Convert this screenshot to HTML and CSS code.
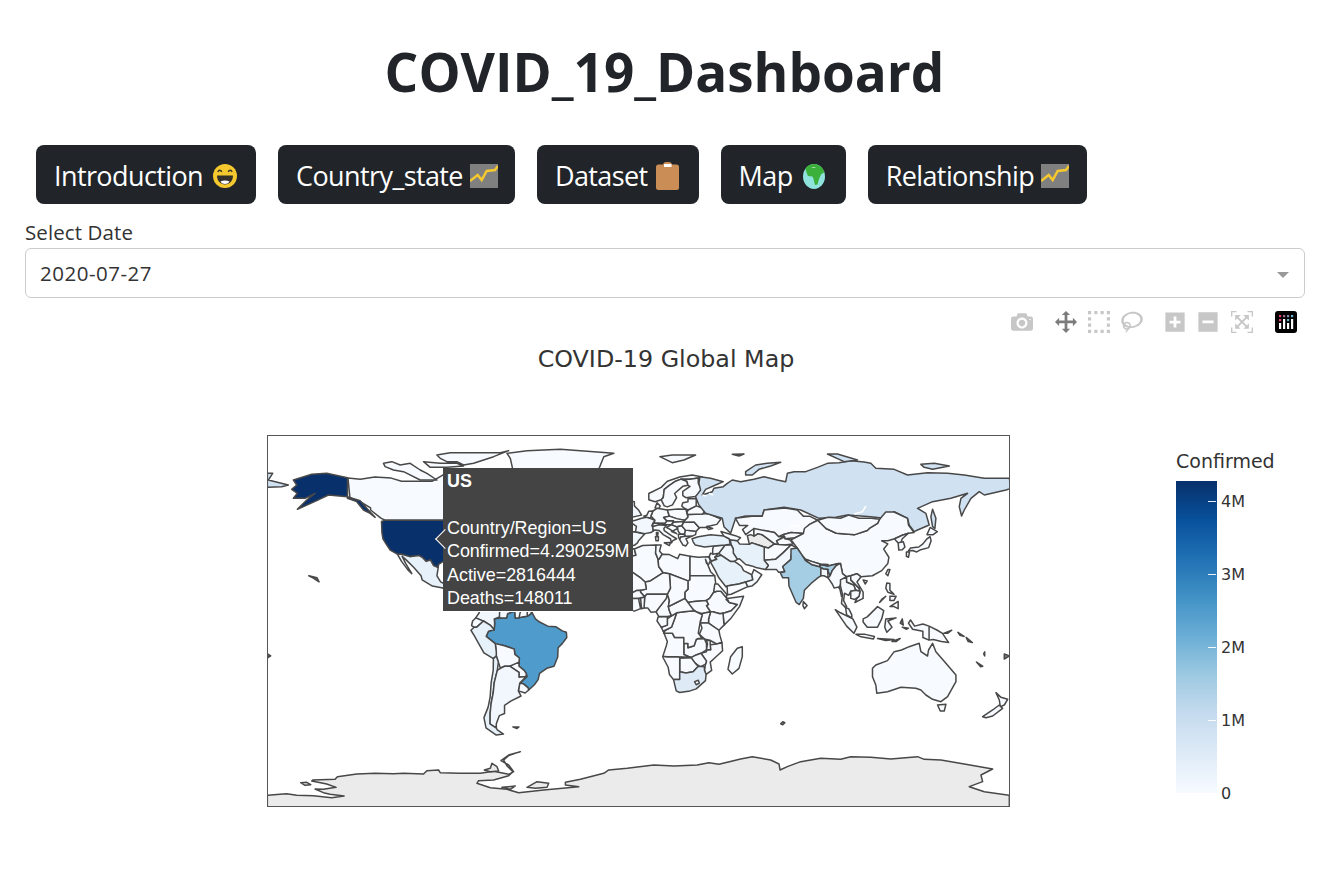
FILE: index.html
```html
<!DOCTYPE html>
<html lang="en">
<head>
<meta charset="utf-8">
<title>COVID_19_Dashboard</title>
<link rel="stylesheet" href="styles.css">
</head>
<body>
<h1 class="page-title">COVID_19_Dashboard</h1>

<nav class="tabs">
  <a class="tab">Introduction
    <svg class="emoji smile" viewBox="0 0 24 24"><circle cx="12" cy="12" r="12" fill="#f5c92e"/><path d="M4.800 7.800q2-3 4 0M15.200 7.800q2-3 4 0" fill="none" stroke="#33302a" stroke-width="1.500"/><path d="M4 11.500h16c0 5.500-3.500 9-8 9s-8-3.500-8-9z" fill="#33302a"/><path d="M7.500 17.500c2.800-1.500 6.200-1.500 9 0-1.200 1.800-2.800 2.500-4.500 2.500s-3.300-.7-4.500-2.500z" fill="#fff"/></svg>
  </a>
  <a class="tab">Country_state
    <svg class="emoji chart" viewBox="0 0 28 24"><rect width="28" height="24" fill="#808080"/><path d="M0 17l7.700-6 4 5 5-9 8.300-1 3-4" fill="none" stroke="#f5c92e" stroke-width="2.500"/></svg>
  </a>
  <a class="tab">Dataset
    <svg class="emoji clip" viewBox="0 0 23 28"><rect y="2.500" width="23" height="25.500" rx="2.500" fill="#c98d55"/><path d="M7 3.500q0-3.500 3-3.500h3q3 0 3 3.500v2H7z" fill="#c98d55"/><rect x="8" y="2" width="7.500" height="3" fill="#fff"/></svg>
  </a>
  <a class="tab">Map
    <svg class="emoji globe" viewBox="0 0 22 25"><ellipse cx="11" cy="12.500" rx="11" ry="12.500" fill="#8ee3dc"/><path d="M2.500 4.500C4.500 1.500 7.800 0 11 0s6.500 1.500 8.500 4.500L21.500 8 18 10.500 16 15 14.500 20.500 12 21 10.500 15 9.500 12.500 5 12 3.500 8.500z" fill="#3bb03b"/><path d="M8 3.500l5-.5-2 1z" fill="#e6f4e6"/></svg>
  </a>
  <a class="tab">Relationship
    <svg class="emoji chart" viewBox="0 0 28 24"><rect width="28" height="24" fill="#808080"/><path d="M0 17l7.700-6 4 5 5-9 8.300-1 3-4" fill="none" stroke="#f5c92e" stroke-width="2.500"/></svg>
  </a>
</nav>

<section class="filter">
  <label class="filter-label">Select Date</label>
  <div class="select"><span>2020-07-27</span><i class="caret"></i></div>
</section>

<section class="graph">
  <div class="modebar">
    <div class="mode-group">
      <svg class="mode" viewBox="0 0 1000 1000"><path transform="matrix(1 0 0 -1 0 850)" d="m500 450c-83 0-150-67-150-150 0-83 67-150 150-150 83 0 150 67 150 150 0 83-67 150-150 150z m400 150h-120c-16 0-34 13-39 29l-31 93c-6 15-23 28-40 28h-340c-16 0-34-13-39-28l-31-94c-6-15-23-28-40-28h-120c-55 0-100-45-100-100v-450c0-55 45-100 100-100h800c55 0 100 45 100 100v450c0 55-45 100-100 100z m-400-550c-138 0-250 112-250 250 0 138 112 250 250 250 138 0 250-112 250-250 0-138-112-250-250-250z m365 380c-19 0-35 16-35 35 0 19 16 35 35 35 19 0 35-16 35-35 0-19-16-35-35-35z"/></svg>
    </div>
    <div class="mode-group">
      <svg class="mode active" viewBox="0 0 1000 1000"><path transform="matrix(1 0 0 -1 0 850)" d="m1000 350l-187 188 0-125-250 0 0 250 125 0-188 187-187-187 125 0 0-250-250 0 0 125-188-188 186-187 0 125 252 0 0-250-125 0 187-188 188 188-125 0 0 250 250 0 0-126 187 188z"/></svg>
      <svg class="mode" viewBox="0 0 1000 1000"><path transform="matrix(1 0 0 -1 0 850)" d="M0 850l0-143 143 0 0 143-143 0z m286 0l0-143 143 0 0 143-143 0z m285 0l0-143 143 0 0 143-143 0z m286 0l0-143 143 0 0 143-143 0z m-857-286l0-143 143 0 0 143-143 0z m857 0l0-143 143 0 0 143-143 0z m-857-285l0-143 143 0 0 143-143 0z m857 0l0-143 143 0 0 143-143 0z m-857-286l0-143 143 0 0 143-143 0z m286 0l0-143 143 0 0 143-143 0z m285 0l0-143 143 0 0 143-143 0z m286 0l0-143 143 0 0 143-143 0z"/></svg>
      <svg class="mode" viewBox="0 0 1031 1000"><path transform="matrix(1 0 0 -1 0 850)" d="m1018 538c-36 207-290 336-568 286-277-48-473-256-436-463 10-57 36-108 76-151-13-66 11-137 68-183 34-28 75-41 114-42l-55-70 0 0c-2-1-3-2-4-3-10-14-8-34 5-45 14-11 34-8 45 4 1 1 2 3 2 5l0 0 113 140c16 11 31 24 45 40 4 3 6 7 8 11 48-3 100 0 151 9 278 48 473 255 436 462z m-624-379c-80 14-149 48-197 96 42 42 109 47 156 9 33-26 47-66 41-105z m-187-74c-19 16-33 37-39 60 50-32 109-55 174-68-42-25-95-24-135 8z m360 75c-34-7-69-9-102-8 8 62-16 128-68 170-73 59-175 54-244-5-9 20-16 40-20 61-28 159 121 317 333 354s407-60 434-217c28-159-121-318-333-355z"/></svg>
    </div>
    <div class="mode-group">
      <svg class="mode narrow" viewBox="0 0 875 1000"><path transform="matrix(1 0 0 -1 0 850)" d="m1 787l0-875 875 0 0 875-875 0z m687-500l-187 0 0-187-125 0 0 187-188 0 0 125 188 0 0 187 125 0 0-187 187 0 0-125z"/></svg>
      <svg class="mode narrow" viewBox="0 0 875 1000"><path transform="matrix(1 0 0 -1 0 850)" d="m0 788l0-876 875 0 0 876-875 0z m688-500l-500 0 0 125 500 0 0-125z"/></svg>
      <svg class="mode" viewBox="0 0 1000 1000"><path transform="matrix(1 0 0 -1 0 850)" d="m250 850l-187 0-63 0 0-62 0-188 63 0 0 188 187 0 0 62z m688 0l-188 0 0-62 188 0 0-188 62 0 0 188 0 62-62 0z m-875-938l0 188-63 0 0-188 0-62 63 0 187 0 0 62-187 0z m875 188l0-188-188 0 0-62 188 0 62 0 0 62 0 188-62 0z m-125 188l-1 0-93-94-156 156 156 156 92-93 2 0 0 250-250 0 0-2 93-92-156-156-156 156 94 92 0 2-250 0 0-250 0 0 93 93 157-156-157-156-93 94 0 0 0-250 250 0 0 0-94 93 156 157 156-157-93-93 0 0 250 0 0 250z"/></svg>
    </div>
    <svg class="logo" viewBox="0 0 22 22"><rect width="22" height="22" rx="3" fill="#000"/><rect x="4" y="4" width="2.200" height="2.200" fill="#e83e6f"/><rect x="8" y="4" width="2.200" height="2.200" fill="#a56a90"/><rect x="12" y="4" width="2.200" height="2.200" fill="#8a8ab0"/><rect x="16" y="4" width="2.200" height="2.200" fill="#6cb4d0"/><rect x="4" y="8" width="2.200" height="2.200" fill="#e83e6f"/><rect x="12" y="8" width="2.200" height="2.200" fill="#6cb4d0"/><g fill="#fff"><rect x="4" y="12" width="2.200" height="6"/><rect x="8" y="8" width="2.200" height="10"/><rect x="12" y="12" width="2.200" height="6"/><rect x="16" y="8" width="2.200" height="10"/></g></svg>
  </div>

  <h2 class="graph-title">COVID-19 Global Map</h2>

  <div class="plot">
    <div class="map">
      <svg class="world" viewBox="268 436 740 370" preserveAspectRatio="none">
        <g transform="translate(260 610) scale(.33333)">
          <path class="ant" d="M22 556 60 553 80 551 110 556 160 557 215 563 252 558 210 553 190 548 165 537 190 538 228 532 200 522 155 513 158 510 225 508 232 500 290 492 345 490 400 491 430 490 490 492 500 482 535 480 540 488 600 490 660 490 700 484 745 493 760 485 745 465 722 452 745 435 780 425 745 437 730 450 740 468 758 485 745 497 700 510 655 512 650 520 690 533 740 538 775 548 850 540 955 530 915 525 915 517 960 508 1030 490 1045 480 1100 475 1180 465 1240 468 1310 465 1345 458 1375 463 1440 447 1475 440 1530 450 1555 462 1558 480 1580 470 1620 455 1680 445 1740 448 1770 440 1830 442 1890 447 1970 440 1990 448 2040 450 2110 462 2195 477 2160 495 2165 515 2125 530 2170 545 2245 556 2245 595 22 595Z"/>
          <path class="ant" d="M122 518 140 517 152 524 135 526Z M672 480 690 475 695 460 710 470 715 483 690 485Z M725 532 745 530 765 528 750 538Z M800 532 830 515 865 520 860 532 825 535Z"/>
        </g>
        <g transform="translate(638 621) scale(2.058 2.056)">
          <!-- North America -->
          <path class="c0" d="M-141-69.600 -135-69 -128-70 -120-69.500 -115-68 -108-68 -100-68 -95-71 -90-69 -85-69 -81-67 -87-64.500 -94-61 -94-58.800 -88-56.800 -82-55 -82-52.500 -79-51.500 -78-55 -77-58 -78-62.500 -70-61 -65-60 -61-56 -56-52 -60-50 -66-50 -61-46 -65-44 -67-45 -67-47 -71-45 -75-45 -79-43 -82-43 -83-46 -89-48 -95-49 -123-49 -125-50 -130-54 -130-55 -135-58 -140-59.800Z"/>
          <path class="us" d="M-124.700-48.400 -123-49 -95-49 -89-48 -83-46 -82-43 -79-43 -75-45 -71-45 -67-47 -67-45 -70-43 -74-40.500 -76-38 -76-35 -81-31.500 -80-26 -81-25 -82.500-28 -84-30 -89-30 -90-29 -94-29.500 -97-27.500 -97.200-26 -99.500-27 -101-29.700 -103-29 -105-31 -106.500-31.800 -111-31.300 -115-32.500 -117-32.500 -120.500-34.500 -122.500-37.500 -124-40 -124.500-43Z"/>
          <path class="c2" d="M-117-32.500 -115-32.500 -111-31.300 -106.500-31.800 -105-31 -103-29 -101-29.700 -99.500-27 -97.200-26 -97.800-22 -96-19 -94-18 -91-18.700 -90.500-21 -87-21.500 -88-18.500 -89-17.800 -91-16 -92-14.500 -95-16 -100-17 -105-20 -105.500-22 -109-26 -112.500-29.500 -114.700-31.500 -113-28 -110-23 -112-25 -115-29Z"/>
          <path class="dot" d="M-160-22 -158-21 -155-19 -156-21Z"/>
          <!-- South America -->
          <path class="br" d="M-60-5 -59.800-1.500 -56.500-2 -54-2.300 -51.600-4 -50-1 -48 .5 -44 2.500 -40 2.800 -37 4.800 -35 5.500 -34.800 8 -37 11 -39 13 -39.200 17.500 -41 22 -44.500 23 -48 25.500 -48.700 28.500 -50.500 31 -53.400 33.700 -53.500 32.500 -56 30.500 -57.600 30.200 -54 27 -54.500 25.500 -55.500 24 -58 22 -57.800 18 -60 16.200 -60.300 13.700 -65 12 -69.500 11 -73.900 7.500 -72.800 5 -70 4.300 -69.800 1 -70-1 -67-1.500 -64-1.500 -63.500-3.500Z"/>
          <path class="c1" d="M-71.500-12.300 -75-11 -77.500-8 -77.300-4 -79-1.500 -75 .2 -72 2 -70 4.300 -69.800 1 -70-1 -67.500-2 -67.300-6 -70-7 -72-7 -73-9Z M-71.500-12 -68-10.500 -62-10.700 -60-8.500 -61-5 -60-5 -63.500-3.500 -64-1.500 -67-1.500 -67.500-2 -67.300-6 -70-7 -72-7 -73-9Z"/>
          <path class="c0" d="M-60-8.500 -57-6 -58-1.500 -59.800-1.500 -60-5 -61-5Z M-57-6 -54-5.800 -54-2.300 -56.500-2 -58-1.500Z M-54-5.800 -51.600-4 -54-2.300Z M-79-1.500 -80.500 0 -81 2.200 -79.800 3 -78.500 3 -75.200 0 -75 .2Z M-69.500 11 -65 12 -60.300 13.700 -60 16.200 -57.800 18 -58 20 -62.500 22 -65 22 -67 23 -68 20 -69 17 -69 15Z M-62.500 22 -58 20 -58 22 -55.500 24 -54.500 25.500 -54.500 27 -58 27.300 -58 25Z M-57.600 30.200 -56 30.500 -53.500 32.500 -53.400 33.700 -55 35 -58.300 34Z"/>
          <path class="c2" d="M-81.300 4.500 -79.800 3 -78.500 3 -75.200 0 -72 2 -70 4.300 -72.800 5 -73.900 7.500 -69.500 11 -69 15 -69 17 -70.400 18.300 -75 15.500 -77 12 -79.500 7.500Z"/>
          <path class="c2" d="M-70.400 18.300 -69 17 -68 20 -68.500 24 -70 30 -70.500 35 -71.500 40 -72 45 -72 50 -69 52 -68.500 53 -65.500 55 -69 55.500 -74 52 -75 47 -73 42 -72 37 -71.500 30 -70.500 24Z"/>
          <path class="c1" d="M-67 23 -65 22 -62.500 22 -58 25 -58 27.300 -54.500 27 -57.600 30.200 -58.300 34 -57 36.500 -62 39 -65 41 -65 45 -67.500 46 -69 50 -69 52 -72 50 -72 45 -71.500 40 -70.500 35 -70 30 -68.500 24Z"/>
          <path class="dot" d="M-61 51.500 -58 51.500 -59 52.300Z"/>
          <!-- Africa -->
          <path class="c0" d="M-13-28 -9.800-29.500 -9.500-32 -6.800-34 -5.500-35.800 -2-35 -1.200-32 -3.500-31.500 -8.700-28.700 -8.700-27.700Z"/>
          <path class="c0" d="M-8.700-27.700 -8.700-28.700 -3.500-31.500 -1.200-32 -2-35 2-36.700 8.500-37 8.300-33 9.500-30 9.800-26.500 12-23.500 5.800-19.500 3.200-19 1.200-20.800 -4.800-25Z"/>
          <path class="c0" d="M8.500-37 11-37 10.200-34 11.500-32.500 10-30 9.500-30 8.300-33Z"/>
          <path class="c0" d="M11.500-32.500 15-32.300 19-30.300 20-32.500 25-31.500 25-20 24-19.500 15-23 12-23.500 9.800-26.500 9.500-30 10-30Z"/>
          <path class="c0" d="M25-31.500 29-31 34-31.300 34.900-29.500 34-27.500 33-28 32.500-30 35-24 37-22 25-22Z"/>
          <path class="c0" d="M25-22 37-22 37.500-18 36.500-14 34.500-11 33-10 27-9.500 24-9 22.500-11 22.500-14 24-15.500 24-19.500 25-20Z"/>
          <path class="c0" d="M24-9 27-9.500 33-10 34-8 33-7.500 35-4.500 31-3.600 28-4.500 25-6.500Z"/>
          <path class="c0" d="M36.500-14 38-14.500 40-14.500 42.500-11.500 43-11 42.500-10.500 44-9 48-8 45-5 42-4 39.500-3.500 36-4.500 35-4.500 33-7.500 34-8 33-10 34.500-11Z"/>
          <path class="c0" d="M37-18 38.500-18 43-12.800 42.500-11.500 40-14.500 38-14.500 36.500-14Z"/>
          <path class="c0" d="M43-11 51-12 49-7 45-1.500 41.500 2 41-3.800 42-4 45-5 48-8 44-9Z"/>
          <path class="c0" d="M35-4.500 36-4.500 39.500-3.500 41-3.800 41.500 2 39 4.500 34 1 34-1Z"/>
          <path class="c0" d="M31-3.600 35-4.500 34-1 34 1 30 1 30.500-1.500Z"/>
          <path class="c0" d="M30 1 34 1 39 4.500 39.500 7 40.500 10.500 38 11.200 34.800 9.500 32 8.700 29.500 6.500 30.800 3.500Z"/>
          <path class="c0" d="M40.500 10.500 40.800 14.500 37 18 34.800 20 35.500 24 32.800 26 32 24 32.500 21 33 19.500 30.300 15.700 33 15 33 14 35 14 34.800 11.500 38 11.200Z"/>
          <path class="c0" d="M22 11 24 11 24 13 27 12 28 9 29 8.500 32 8.700 33 11 33 14 30.300 15.700 28 16.500 25.500 17.800 22 16.300Z"/>
          <path class="c0" d="M33 9.500 34.800 9.500 34.800 11.500 35 14 33 14 33.500 11Z"/>
          <path class="c0" d="M25.500 17.800 28 16.500 30.300 15.700 33 19.500 32.500 21 30 22.300 27.500 20.500Z"/>
          <path class="c0" d="M20 18 25.500 17.800 27.500 20.500 29 22 26.500 24.700 23 25.300 20 24.700 20 22Z"/>
          <path class="c0" d="M11.800 17.200 14 17.400 18.500 17.400 25 17.600 25.500 17.800 20 18 20 22 20 28.500 17 28.500 15 26 14.400 22.500 12 18Z"/>
          <path class="za" d="M17 28.500 20 28.500 20 24.700 23 25.300 26.500 24.700 29 22 32 22.300 32 24 32.800 26 32.500 29 28 33 25 34 20 34.800 18.300 34Z"/>
          <path class="c0" d="M27.200 29.500 29 28.800 29.500 30.200 28 31Z"/>
          <path class="c0" d="M12 5 13 5.800 16.500 6 17.500 8 22 8 22 11 22 16.300 25 17.600 18.500 17.400 14 17.400 11.800 17.200 13.500 12 14 10Z"/>
          <path class="c0" d="M12.200 6 13 4.500 16 3 17.500-1 18.500-4 22-4.500 27-5 31-3 30 0 29.500 3 29 6 29.500 6.500 30.800 8.500 29 8.500 28 9 27 12 24 13 24 11 22 11 22 8 17.500 8 16.500 6Z"/>
          <path class="c0" d="M11 3 14 2 14-1 16-2.500 18.500-4 17.500-1 16 3 13 4.500 12 5Z"/>
          <path class="c0" d="M9 0 9.500-2 14-2.200 14-1 14 2 11 3Z"/>
          <path class="c0" d="M8.500-4.500 10-6.500 13.500-11 14.500-13 15-10 14.500-7 15-5 16-2.500 14-2.200 9.800-2.300Z"/>
          <path class="c0" d="M14.500-7 18.500-9 22.500-11 24-9 27-5 22-4.500 18.500-4 16-2.500 15-5Z"/>
          <path class="c0" d="M14-13 15.500-16 15-23 24-19.500 24-15.500 22.500-14 22.500-11 18.500-9 14.500-7 15-10Z"/>
          <path class="c0" d="M3.200-19 5.800-19.500 12-23.500 15-23 15.500-16 14-13 9-13 4-13 3-11.800 1-14 1-15 3.800-15.500Z"/>
          <path class="c0" d="M-5.500-15.500 -6.500-25 -4.800-25 1.200-20.800 3.200-19 3.800-15.500 1-15 -1-14.800 -3.500-13.500 -5-11Z"/>
          <path class="c0" d="M2.700-6.300 3-11.800 4-13 9-13 14-13 13.500-11 10-6.500 8.500-4.500 6-4.300 4.500-6.300Z"/>
          <path class="c0" d="M-5-11 -3.500-13.500 -1-14.800 1-15 1-14 3-11.800 0-11 -3-11Z"/>
          <path class="c0" d="M-3-11 0-11 1-6 -2-4.800 -3-5Z M0-11 1-11 1.500-6 1-6Z M1-11 3-11.800 2.700-6.300 1.500-6Z"/>
          <!-- Europe -->
          <path class="c1" d="M-9-43 -2-43.400 3-42.300 0-39 -.5-38 -2-36.800 -5.500-36 -7-37 -7.500-39 -7-41.800 -8.800-42Z"/>
          <path class="c1" d="M-1.500-43.400 3-42.500 6-43 7.500-44 6.500-46.500 8-49 4-50.500 1.500-50 -1.500-49 -4.500-48.400 -1-46Z"/>
          <path class="c1" d="M-5.500-50 1.500-51.500 0-54 -2-56 -2-58 -5-58.600 -6-56 -3-54 -5-52.500Z"/>
          <path class="c0" d="M6-51 7-53.500 9-54.800 14-54 15-51 12.200-50.300 13.800-48.700 13-47.500 7.500-47.600 8-49Z"/>
          <path class="c0" d="M2.500-51 4-51.400 5-53.400 7-53.500 6-51 6-50 4-50.500Z"/>
          <path class="c0" d="M8-55 9-57.500 10.500-56 10-54.800Z"/>
          <path class="c0" d="M7-47.500 10-47.500 9.500-46 7-46Z M9.500-47.300 13-47.500 13.800-48.700 17-48.700 16-46.800 10-46.800Z"/>
          <path class="c0" d="M7-44 7-46 10-46.800 13.500-46.500 12.300-45 12.500-44 16-41.500 18.500-40 16.500-39 16-38 15.500-40 12-42 10-44 8-44.300Z M12.500-38 15.500-38.200 15-36.700Z M8.200-41 9.700-41 9.600-39 8.500-39Z M8.700-43 9.500-43 9.300-41.500 8.700-41.800Z"/>
          <path class="c0" d="M14-54 19-54.500 23-54.300 24-50.500 22.500-49 19-49.500 15-51Z"/>
          <path class="c0" d="M12.200-50.300 15-51 18.500-49.800 22.500-49 22-48.400 17-48 17-48.700 13.800-48.700Z"/>
          <path class="c0" d="M16-46.800 17-48 22-48.400 21-46.300 18.500-45.800Z"/>
          <path class="c0" d="M13.500-45.500 16-46.800 18.500-45.800 19-45 16-43.500 18.500-42.500 14.500-45Z"/>
          <path class="c0" d="M18.900-45.800 21-46.300 22.800-44.200 22.400-42.300 20.500-42.200 19.300-43.500 19-45Z"/>
          <path class="c0" d="M19.300-42.200 20.500-42.200 22.400-42.300 22.800-41.200 20.500-40.900 20-39.600 19.500-40.500Z"/>
          <path class="c0" d="M20-39.600 20.500-40.900 22.800-41.200 26-41.300 23-40 24-38 23-36.500 21.500-37Z"/>
          <path class="c0" d="M22.400-42.300 22.800-44.200 28-43.700 27.700-42 26-41.300 22.800-41.200Z"/>
          <path class="c0" d="M21-46.300 22-48 27-48.200 29.500-45.300 28-43.700 22.800-44.200Z"/>
          <path class="c0" d="M22-48.400 24-50.500 24-51.800 31-52 34-52.300 40-49.600 38-47 35-46.300 33-46 36-45 34-44.500 33-45.500 30-45.500 29.500-45.300 27-48.200 22-48Z"/>
          <path class="c0" d="M23.500-52.500 24-54 28-56 31-55 32-53 31-52 24-51.800Z"/>
          <path class="c0" d="M21-56 21.500-57.500 24-58 24-59.500 28-59.500 28-56 24-54 22-55Z"/>
          <path class="c0" d="M5-59 5-62 11-65 14-68 20-70 26-71 31-70 29-69.500 25-69 20.700-69 18-68 15-66 12.500-64 12-60 11-59 8-58Z"/>
          <path class="c0" d="M11-59 12.500-56 14-55.500 16.500-56.500 18.500-60 17.500-62 21.500-65.500 24-66 23.500-68 20.700-69 18-68 15-66 12.500-64 12-60Z"/>
          <path class="c0" d="M21.500-61 21.500-63 25-65.500 24-66 23.500-68 20.700-69 25-69 29-69.500 29-67 31-63 27.500-60.500 23-60Z"/>
        </g>
        <!-- Russia and northern islands, traced in page scale -->
        <g transform="translate(630 430) scale(.33333)">
          <path class="ru" d="M208 140 240 145 278 155 255 165 225 178 215 195 245 185 250 175 278 170 290 160 305 150 330 155 370 148 400 140 440 150 465 155 470 130 490 125 525 125 560 112 590 100 625 98 660 92 700 96 720 100 735 115 790 118 830 135 890 128 950 130 1000 135 1060 145 1135 145 1140 175 1125 180 1060 195 1045 185 1020 205 1000 240 992 258 985 230 990 205 1010 190 960 205 905 215 860 235 885 250 895 285 860 300 850 305 835 285 830 265 790 245 760 265 720 260 650 255 615 262 565 265 510 240 460 232 400 240 395 258 345 258 315 265 300 310 280 290 275 265 225 250 205 225 195 200 210 180 205 160Z"/>
          <path class="ru" d="M345 125 375 105 410 100 450 97 420 108 385 118 365 135 345 135Z M590 72 620 72 680 90 640 95Z M870 103 910 100 955 108 905 118 880 112Z M905 238 915 265 912 295 905 290 900 260Z"/>
          <path class="c0" d="M88 80 125 75 195 75 160 90 125 98Z"/>
          <path class="dot" d="M305 73 340 72 325 78Z"/>
          <path class="lake" d="M670 252 695 245 705 228 M215 195 228 198 M235 190 248 195"/>
        </g>
        <g transform="translate(260 430) scale(.33333)">
          <path class="ru" d="M22 130 38 130 25 150 85 165 65 170 22 172Z"/>
          <path class="us" d="M262 143 200 130 155 133 100 150 110 165 95 178 112 190 100 205 135 205 165 190 140 210 112 238 170 212 205 195 262 200 300 212 320 235 345 262 330 250 310 240 290 215 262 205Z"/>
          <path class="c0" d="M740 70 800 62 900 58 1000 65 1060 70 1030 80 1020 105 1010 130 760 130 750 85Z M530 75 570 68 640 68 720 68 745 62 700 80 670 90 640 100 610 105 590 95 560 95 540 85Z M490 95 540 100 590 100 610 108 560 112 510 112Z M370 100 395 95 420 105 450 100 480 120 500 130 530 150 480 150 430 125 400 120 375 110Z"/>
        </g>
        <g transform="translate(638 621) scale(2.058 2.056)">
          <!-- Middle East, Central Asia -->
          <path class="c0" d="M47-50 55-51 60-51 61-54 71-55 77-54 80-51 83-51 87-49 83-47 80-42.500 74-43 70-42 68-41 66-43 61-44 56-41.300 56-45 52-42 50.500-44.500 53-46.500 49-46.500Z"/>
          <path class="lake" d="M73.500-46 78-46.500"/>
          <path class="nd" d="M52.800-41.500 54.500-42 56-41.300 58-42.500 60-42 66-37.500 63-35.500 61-36 55-38 53.800-37.300Z"/>
          <path class="c0" d="M56-45 56-41.300 58-42.500 60-42 66-37.500 68-37.200 67-39 71-41 68-41 66-43 61-44Z"/>
          <path class="c0" d="M70-42 74-43 80-42.500 76-40.500 71-40 71-41Z M68-37.200 71-37 75-37.500 73.500-39.500 71-40 71-41 67-39Z"/>
          <path class="c0" d="M61-36 63-35.500 66-37.500 68-37.200 71-37 74-37 71-34 70-33 66.500-30 61-29.500 61-33Z"/>
          <path class="c1" d="M61-29.500 66.500-30 70-33 71-34 74-37 77-35.500 74-32 74-30 70-26.500 71-24 68-23.700 67-25 61.500-25 63-27Z"/>
          <path class="c2" d="M44.500-39.500 48-39 49-37.500 53.800-37.300 55-38 61-36 61-33 61-29.500 63-27 61.500-25 57-26 55-26.800 52-27.500 49-30.300 48-30 46-33 46-35 45-37Z"/>
          <path class="c1" d="M39-33 42-37 45-37 46-35 46-33 48-30 46.500-29 44.500-29 40-32Z"/>
          <path class="c0" d="M36-35 36.500-36.500 42-37 39-33 36-32.500Z M35-33 36-32.500 39-33 37-31 38-30 36-29.300 35-29.500 34.300-31.300Z"/>
          <path class="c2" d="M35-28.500 36-29.300 38-30 37-31 40-32 44.500-29 46.500-29 48-28 50-26.500 51-24.500 55-22.500 55.500-20 52-19 48.700-18 45-17.400 43-17 42.500-16.500 39-21 37-25Z"/>
          <path class="c0" d="M43-17 45-17.400 48.700-18 52-19 53-16.700 45-13 43.200-12.800Z"/>
          <path class="c0" d="M55.500-20 55-22.500 56-25 59.800-22.500 57.500-19 55-17 53-16.700 52-19Z"/>
          <path class="c2" d="M26-40 29-41 35-42 41.500-41.300 44-40 44.500-37.300 42-37 36.500-36.500 32-36 27.500-37 26.500-38.500Z"/>
          <path class="c0" d="M40-43.500 47-41.500 49.500-40.500 48-39 44.500-39.500 44-40 41.500-41.300Z"/>
          <!-- South and East Asia -->
          <path class="c0" d="M74-39.500 76-40.500 80-42.500 80.500-45 83-47 87-49 91-45 96-42.700 105-42 111-44 112-45 116-47.500 117-49.500 120-53 124-53 130.500-50 131-46.700 133.700-43 131-42.700 128-41.700 124.300-40 121-39 118-39 121-37.500 119-35 121.500-31 121-28 118-24.500 113.500-22 108-21.500 106-23 103-22 101-21.500 99-23 98-28 97-28 92-26.800 88.200-27.500 88-27.700 84-29 81-30 79-32.500 77-35.500Z"/>
          <path class="c0" d="M87-49 92-50.500 98-50 102-51.500 107-50 113-50 117-49.500 116-47.500 112-45 111-44 105-42 96-42.700 91-45Z"/>
          <path class="in" d="M74-32.500 74-35 77-35.500 79-32.500 81-29.500 84-27.500 88-26.400 88.200-27.500 92-26.800 97-28 96-27 94-24.500 93-22 91.800-24.500 92-25 89.800-25.300 88.500-26 88.500-22 87-21 84-18.500 80.500-15 80-11 78-8 76.500-9 73-17 72.800-21 70-21 68.800-23.500 71-24 70-26.500 74-30Z"/>
          <path class="c0" d="M81-30 84-29 88-27.700 88-26.400 84-27.500 81-29.500Z M88-27.700 92-27.500 92-26.800 88.200-27.500Z"/>
          <path class="c1" d="M88.500-26 89.800-25.300 92-25 91.800-24.500 92-21 90-22 88.500-22Z"/>
          <path class="c0" d="M80-9.500 81.800-7.500 80.500-6 79.800-7.500Z M109-20 111-19.500 110-18Z M121-25 122-25 121-22 120-23Z"/>
          <path class="c0" d="M124.300-40 128-41.700 131-42.700 128-40 127.500-38.500 126-38 125-39Z M126-38 128.500-38.500 129.300-36 128-34.700 126.300-34.500Z"/>
          <path class="c0" d="M130.900-34 132-35.500 136-36 138-37.500 140-40 141.500-41 142-39 140.800-35.700 137-34.700 135-33.600 133-34.300Z M140-42 141.500-45.500 145-43.500 143-42Z M130-33.500 131.500-33.500 131-31 130-31.500Z"/>
          <path class="c0" d="M92-21 93-22 94-24.500 96-27 98-28 99-23 101-21.500 98.500-19 97.500-16.500 98.500-12 98-15 97-16.500 95-16 94-18Z"/>
          <path class="c0" d="M98-20 101-21.500 101-19 104.500-17.500 105.500-15 103-14.500 102-12.500 100-13.500 99.500-10 101-7 100.500-6.500 98.500-8.500 99-13 98.500-15 98-17Z"/>
          <path class="c0" d="M101-21.500 103-22 103-20 107-16 107.500-14.500 105.500-15 104.500-17.500 101-19Z"/>
          <path class="c0" d="M103-22 106-23 108-21.500 106-19 109-14 109-11 105-9 106-11 107-12 107.500-14.500 107-16 103-20Z"/>
          <path class="c0" d="M103-14.500 105.500-15 107.500-14.500 107-12 105-10.500 103-11Z"/>
          <path class="c0" d="M100.500-6.500 102-6 103.500-3 103.500-1.500 101-3Z"/>
          <path class="c0" d="M95.500-5.500 98-4 104-1 106 3 104.500 6 101 2.500Z M105.500 6.500 110 6.500 114.500 7.500 114 8.700 108 7.700Z M109-1 111-2 116-7 119-5 118-1 116 3 111 3 109 .5Z M119.500 3 120-1 125-1.500 121 0 123 3 120.500 5.500Z M120.500-18.500 122-18.300 122-15 124-13 121-14 120-16Z M122-7 126-9.500 126-6 124-7Z M122-12 125-12 124-10 122-10Z M117-9 120-12 118-10.500Z M131 1 132-.5 134 2.500 138 1.500 141 2.500 141 9.300 138 8 138 5 133 4Z M141 2.500 145 4.500 147.500 6 150.500 10.500 147 10 143 9 141 9.300Z"/>
          <path class="dot" d="M116 8.500 120 8.700 124 9 120 9.500Z M123 10 127 8.500 125 10Z M128 3 131 3.500 130 4Z M127 1 128 -1 128.500 2Z M148 6 152 4.500 150 6Z M155 5.500 158 7.500 156 7Z M159 8 162 10.500 160 10Z M168 15 168 17 167.500 16Z M164 20 167 22 166 22.300Z M177.500 16 180 17 177.500 18.500Z M-180 16 -178.500 17 -180 18Z M70 49 71 49.500 70 50.500 69 50Z"/>
        </g>
        <!-- Oceania and Madagascar, traced in page scale -->
        <g transform="translate(630 610) scale(.33333)">
          <path class="c0" d="M725 175 735 165 770 152 790 125 812 120 835 110 865 100 870 125 890 138 893 120 905 100 915 125 945 160 975 195 975 215 950 260 930 275 905 268 885 255 870 240 855 235 810 232 770 245 738 250 735 225 725 200Z"/>
          <path class="c0" d="M920 285 945 283 940 303 928 303Z M1055 320 1085 300 1105 285 1115 295 1085 318 1065 323Z M1095 248 1110 262 1130 268 1120 285 1108 290 1105 270Z M300 140 320 115 335 110 335 140 325 175 305 192 292 178Z"/>
        </g>
      </svg>
      <div class="hover">
        <b class="hover-name">US</b>
        <span>Country/Region=US</span>
        <span>Confirmed=4.290259M</span>
        <span>Active=2816444</span>
        <span>Deaths=148011</span>
      </div>
    </div>

    <div class="legend">
      <div class="legend-title">Confirmed</div>
      <div class="legend-body">
        <div class="legend-bar"></div>
        <div class="legend-ticks">
          <div class="tick">4M</div>
          <div class="tick">3M</div>
          <div class="tick">2M</div>
          <div class="tick">1M</div>
          <div class="tick">0</div>
        </div>
      </div>
    </div>
  </div>
</section>
</body>
</html>
```
FILE: styles.css
```css
* { box-sizing: border-box; }

html, body {
  margin: 0;
  background: #fff;
}

body {
  width: 1325px;
  height: 887px;
  overflow: hidden;
  font-family: "Open Sans", "Noto Sans", sans-serif;
  color: #212529;
}

.page-title {
  margin: 0;
  padding: 37px 0 0 4px;
  height: 145px;
  font-size: 53px;
  line-height: 70px;
  font-weight: 700;
  text-align: center;
}

.tabs {
  display: flex;
  gap: 22px;
  padding-left: 36px;
}

.tab {
  display: flex;
  align-items: center;
  gap: 8px;
  height: 59px;
  padding: 2px 18px 0;
  border-radius: 8px;
  background: #212529;
  color: #fff;
  font-size: 27px;
  letter-spacing: -0.6px;
}

.tab:last-child {
  padding-right: 19px;
}

.emoji {
  display: block;
  flex: none;
  margin-top: 1px;
}

.emoji.smile {
  width: 24px;
  height: 24px;
  margin-left: 2px;
  margin-right: 1px;
}

.emoji.chart {
  width: 28px;
  height: 24px;
  margin-left: -1px;
  margin-right: -1px;
}

.emoji.clip {
  width: 23px;
  height: 28px;
  margin-right: 2px;
}

.emoji.globe {
  width: 22px;
  height: 25px;
  margin-left: 2px;
  margin-right: 3px;
}

.filter {
  padding: 14px 20px 0 25px;
}

.filter-label {
  display: block;
  height: 30px;
  font-size: 20.500px;
  line-height: 28px;
  letter-spacing: 0.1px;
  color: #333;
}

.select {
  display: flex;
  align-items: center;
  justify-content: space-between;
  height: 50px;
  padding: 0 15px 0 14px;
  border: 1px solid #ccc;
  border-radius: 6px;
  font-size: 20.500px;
  letter-spacing: 0.5px;
  color: #333;
}

.caret {
  width: 0;
  height: 0;
  border: 6px solid transparent;
  border-top-color: #999;
  border-bottom: 0;
  margin-top: 3px;
}

.graph {
  padding: 13px 28px 0 25px;
}

.modebar {
  display: flex;
  justify-content: flex-end;
  align-items: center;
  gap: 22px;
  height: 22px;
}

.mode-group {
  display: flex;
  gap: 11px;
}

.mode {
  display: block;
  width: 22px;
  height: 22px;
  fill: rgba(68, 68, 68, 0.3);
}

.mode.narrow {
  width: 20px;
  margin-right: 2px;
}

.mode.active {
  fill: rgba(68, 68, 68, 0.7);
}

.logo {
  display: block;
  width: 22px;
  height: 22px;
}

.graph-title {
  margin: 12px 0 0;
  height: 28px;
  padding-left: 10px;
  font-family: "DejaVu Sans", Verdana, sans-serif;
  font-size: 23.800px;
  line-height: 28px;
  font-weight: 400;
  text-align: center;
  color: #333;
}

.plot {
  display: flex;
  align-items: flex-start;
  margin-top: 62px;
  padding-left: 242px;
}

.map {
  position: relative;
  width: 743px;
  height: 372px;
  flex: none;
  border: 1px solid #555;
}

.world {
  display: block;
  width: 741px;
  height: 370px;
}

.world path {
  stroke: #484848;
  stroke-width: 1.500px;
  stroke-linejoin: round;
  vector-effect: non-scaling-stroke;
}

.world .ant { fill: #ebebeb; }
.world .nd { fill: #ebebeb; }
.world .c0 { fill: #f7fbff; }
.world .c1 { fill: #f1f7fd; }
.world .c2 { fill: #e7f1fa; }
.world .za { fill: #deebf7; }
.world .ru { fill: #d0e1f2; }
.world .in { fill: #a5cde3; }
.world .br { fill: #4f9bcb; }
.world .us { fill: #08306b; }
.world .dot { fill: #7a7a7a; }
.world .lake { fill: none; stroke: #fff; }

.hover {
  position: absolute;
  left: 175px;
  top: 32px;
  display: flex;
  flex-direction: column;
  width: 190px;
  height: 144px;
  padding: 2px 4px 0;
  border-bottom: 1px solid #fff;
  background: #444;
  color: #fff;
  font-family: "Liberation Sans", Arial, sans-serif;
  font-size: 17.900px;
  line-height: 23.600px;
  white-space: nowrap;
}

.hover::before {
  content: "";
  position: absolute;
  left: -5px;
  top: 64px;
  width: 13px;
  height: 13px;
  background: #444;
  border-left: 1px solid #fff;
  border-bottom: 1px solid #fff;
  transform: rotate(45deg);
}

.hover-name {
  position: relative;
  height: 47px;
}

.hover span {
  position: relative;
}

.legend {
  margin-left: 166px;
  flex: none;
  font-family: "DejaVu Sans", Verdana, sans-serif;
  color: #333;
}

.legend-title {
  height: 46px;
  padding-top: 14px;
  font-size: 19px;
  line-height: 24px;
  white-space: nowrap;
}

.legend-body {
  display: flex;
}

.legend-bar {
  width: 41px;
  height: 312px;
  background: linear-gradient(to top, #f7fbff, #deebf7 12.500%, #c6dbef 25%, #9ecae1 37.500%, #6baed6 50%, #4292c6 62.500%, #2171b5 75%, #08519c 87.500%, #08306b);
}

.legend-ticks {
  display: flex;
  flex-direction: column;
  justify-content: space-between;
  height: 312px;
  margin: 11px 0 0 -9px;
}

.tick {
  display: flex;
  align-items: center;
  gap: 5px;
  height: 20px;
  font-size: 16px;
  line-height: 20px;
}

.tick::before {
  content: "";
  width: 8px;
  height: 1px;
  background: rgba(255, 255, 255, 0.9);
  transform: translateY(-1px);
}
```
